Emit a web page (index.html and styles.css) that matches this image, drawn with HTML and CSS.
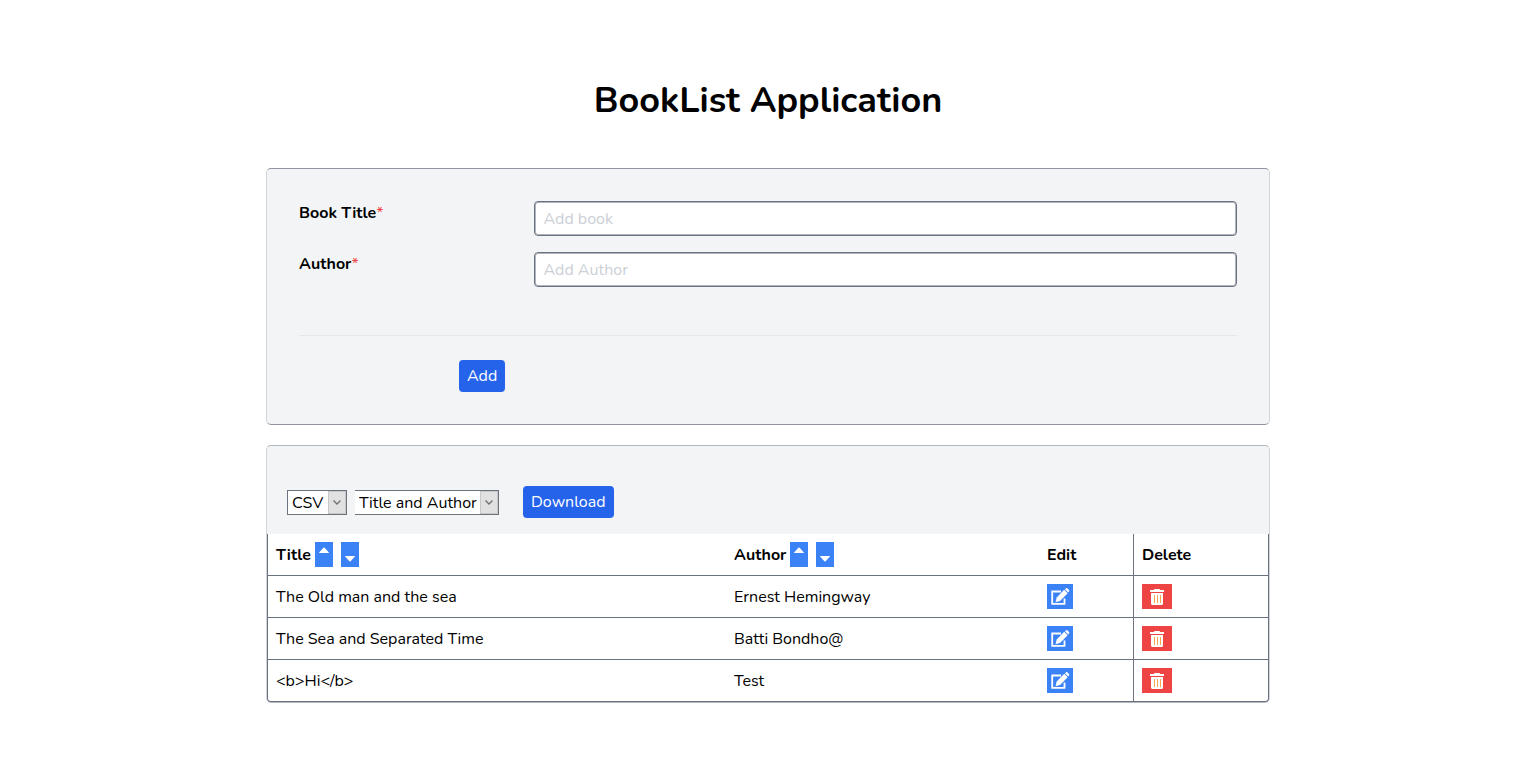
FILE: index.html
```
<!DOCTYPE html>
<html lang="en">
<head>
<meta charset="utf-8">
<meta name="viewport" content="width=device-width, initial-scale=1">
<title>BookList Application</title>
<link rel="stylesheet" href="styles.css">
</head>
<body>
<svg class="sprite" aria-hidden="true">
  <symbol id="edit" viewBox="0 0 20 18">
    <path d="M11 3.5H2.2V15.8H14.5V10.5" fill="none" stroke="currentColor" stroke-width="1.8"/>
    <path d="M14.2 1.800 17.700 5.300 10 13 5.500 14.200 6.700 9.500z" fill="currentColor"/>
    <path d="M14.900 1.200 15.800.400q.9-.7 1.800.2l1.200 1.200q.9.900.2 1.800l-.8.900z" fill="currentColor"/>
  </symbol>
  <symbol id="trash" viewBox="0 0 14 16">
    <path d="M4.5 0h5l.8 1H14v2H0V1h3.7zM1 4h12v10.5a1.5 1.5 0 0 1-1.5 1.5h-9A1.5 1.5 0 0 1 1 14.500z" fill="currentColor"/>
    <path d="M4.500 6v8M7.500 6v8M10.500 6v8" stroke="#f9a850" stroke-width="1"/>
  </symbol>
  <symbol id="up" viewBox="0 0 10 16"><path d="M.5 6q-.8 0-.2-.7L4.400.8q.6-.6 1.200 0l4.100 4.500q.6.700-.2.700z" fill="currentColor"/></symbol>
  <symbol id="down" viewBox="0 0 10 16"><path d="M.5 9q-.8 0-.2.700l4.100 4.500q.6.600 1.200 0l4.100-4.500q.6-.7-.2-.7z" fill="currentColor"/></symbol>
  <symbol id="chevron" viewBox="0 0 8 5"><path d="M.5.5 4 4 7.500.5" fill="none" stroke="currentColor" stroke-width="1.300"/></symbol>
</svg>
<main class="page">
  <h1 class="heading">BookList Application</h1>

  <form class="card entry">
    <div class="field">
      <label for="title">Book Title<span class="required">*</span></label>
      <input id="title" type="text" placeholder="Add book">
    </div>
    <div class="field">
      <label for="author">Author<span class="required">*</span></label>
      <input id="author" type="text" placeholder="Add Author">
    </div>
    <hr class="rule">
    <button class="button add" type="button">Add</button>
  </form>

  <section class="card list">
    <div class="toolbar">
      <span class="picker picker-format">
        <select aria-label="File format"><option>CSV</option></select>
        <span class="arrow"><svg><use href="#chevron"/></svg></span>
      </span>
      <span class="picker picker-columns">
        <select aria-label="Columns"><option>Title and Author</option></select>
        <span class="arrow"><svg><use href="#chevron"/></svg></span>
      </span>
      <button class="button download" type="button">Download</button>
    </div>
    <table class="books">
      <thead>
        <tr>
          <th class="col-title"><div class="sortable">Title
            <button class="sort" type="button" aria-label="Sort title ascending"><svg><use href="#up"/></svg></button>
            <button class="sort" type="button" aria-label="Sort title descending"><svg><use href="#down"/></svg></button></div></th>
          <th class="col-author"><div class="sortable">Author
            <button class="sort" type="button" aria-label="Sort author ascending"><svg><use href="#up"/></svg></button>
            <button class="sort" type="button" aria-label="Sort author descending"><svg><use href="#down"/></svg></button></div></th>
          <th class="col-edit">Edit</th>
          <th class="col-delete">Delete</th>
        </tr>
      </thead>
      <tbody>
        <tr>
          <td>The Old man and the sea</td><td>Ernest Hemingway</td>
          <td><button class="action edit" type="button" aria-label="Edit"><svg><use href="#edit"/></svg></button></td>
          <td><button class="action delete" type="button" aria-label="Delete"><svg><use href="#trash"/></svg></button></td>
        </tr>
        <tr>
          <td>The Sea and Separated Time</td><td>Batti Bondho@</td>
          <td><button class="action edit" type="button" aria-label="Edit"><svg><use href="#edit"/></svg></button></td>
          <td><button class="action delete" type="button" aria-label="Delete"><svg><use href="#trash"/></svg></button></td>
        </tr>
        <tr>
          <td>&lt;b&gt;Hi&lt;/b&gt;</td><td>Test</td>
          <td><button class="action edit" type="button" aria-label="Edit"><svg><use href="#edit"/></svg></button></td>
          <td><button class="action delete" type="button" aria-label="Delete"><svg><use href="#trash"/></svg></button></td>
        </tr>
      </tbody>
    </table>
  </section>
</main>
</body>
</html>
```

FILE: styles.css
```
*, *::before, *::after { box-sizing: border-box; }

body {
  margin: 0;
  background: #fff;
  color: #000;
  font: 16px/24px Nunito, "Open Sans", sans-serif;
}

button, input, select { font: inherit; color: inherit; margin: 0; }
svg { display: block; }
.sprite { position: absolute; width: 0; height: 0; }

.page {
  width: 66.6667%;
  margin: 0 auto;
  padding: 80px 10px 40px;
}

.heading {
  margin: 0 0 46px;
  font-size: 36px;
  line-height: 42px;
  font-weight: 700;
  text-align: center;
}

.card {
  margin-bottom: 20px;
  border: 1px solid #d1d5db;
  border-radius: 5px;
  background: #f3f4f6;
}

.entry {
  padding: 32px;
  border-top-color: #9093a3;
  border-bottom-color: #9093a3;
}

.field {
  display: grid;
  grid-template-columns: 1fr 3fr;
  align-items: start;
  margin-bottom: 16px;
}
.field label { font-weight: 700; }
.required { color: #ef4444; font-weight: 400; }
.field input {
  width: 100%;
  height: 35px;
  padding: 0 9px;
  border: 1px solid #6b7280;
  border-radius: 4px;
  background: #fff;
  box-shadow: inset 0 0 0 1px #b0b4bd;
}
.field input::placeholder { color: #cbcfd6; opacity: 1; }

.rule {
  margin: 48px 0 24px;
  border: 0;
  border-top: 1px solid #e5e7eb;
}

.button {
  height: 32px;
  padding: 0 8px;
  border: 0;
  border-radius: 4px;
  background: #2563eb;
  color: #fff;
}
.add { display: block; margin-left: 160px; }

.list { border-top-color: #b4b8bf; border-bottom-color: #b4b8bf; }

.toolbar {
  display: flex;
  align-items: center;
  gap: 8px;
  padding: 40px 20px 16px;
}
.picker { position: relative; height: 25px; }
.picker select {
  display: block;
  appearance: none;
  width: 100%;
  height: 25px;
  padding: 0 4px;
  border: 1px solid #6b7280;
  border-radius: 0;
  background: #fff;
}
.picker-format { width: 60px; }
.picker-columns { width: 144px; }
.picker-columns select { border-left: 0; }
.arrow {
  position: absolute;
  top: 1px;
  right: 1px;
  bottom: 1px;
  display: grid;
  place-items: center;
  width: 18px;
  border: 1px solid #c8c8c8;
  background: #e1e1e1;
  color: #707070;
  pointer-events: none;
}
.arrow svg { width: 8px; height: 5px; }
.download { margin-left: 16px; }

.books {
  width: 100%;
  table-layout: fixed;
  border-spacing: 0;
  border: 1px solid #6b7280;
  border-top: 0;
  border-radius: 0 0 4px 4px;
  background: #fff;
}
.books th, .books td {
  padding: 8px;
  border-bottom: 1px solid #6b7280;
  text-align: left;
  vertical-align: middle;
}
.books th { font-weight: 700; }
.books tbody tr:last-child td { border-bottom: 0; }
.books td:last-child, .books th:last-child { border-left: 1px solid #6b7280; }
.col-title { width: 45.8%; }
.col-author { width: 31.3%; }
.col-edit { width: 9.4%; }
.col-delete { width: 13.5%; }

.sortable { display: flex; align-items: center; gap: 8px; }
.sort {
  display: grid;
  place-items: center;
  width: 18px;
  height: 25px;
  padding: 0;
  border: 0;
  background: #3b82f6;
  color: #fff;
}
.sort:first-of-type { margin-left: -4px; }
.sort svg { width: 10px; height: 16px; }

.action {
  display: grid;
  place-items: center;
  height: 25px;
  padding: 0;
  border: 0;
  color: #fff;
}
.edit { width: 26px; background: #3b82f6; }
.edit svg { width: 20px; height: 18px; }
.delete { width: 30px; background: #ef4444; }
.delete svg { width: 14px; height: 16px; }
```
